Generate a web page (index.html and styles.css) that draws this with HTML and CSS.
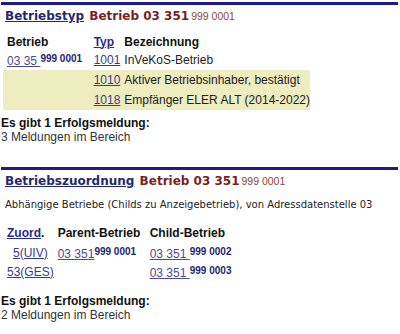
FILE: index.html
```html
<!DOCTYPE html>
<html lang="de">
<head>
<meta charset="utf-8">
<link rel="stylesheet" href="styles.css">
</head>
<body>
<section class="block">
  <div class="head">
    <a class="head-link" href="#">Betriebstyp</a>
    <span class="head-title">Betrieb 03 351</span><span class="head-num">999 0001</span>
  </div>
  <table class="grid grid-typ">
    <tr class="hdr">
      <th class="c-betrieb">Betrieb</th>
      <th class="c-typ"><a href="#">Typ</a></th>
      <th class="c-bez">Bezeichnung</th>
    </tr>
    <tr>
      <td><a class="bnr" href="#">03 35 </a><b class="sup">999 0001</b></td>
      <td><a class="lnk" href="#">1001</a></td>
      <td class="c-bez">InVeKoS-Betrieb</td>
    </tr>
    <tr class="hl">
      <td></td>
      <td><a class="lnk" href="#">1010</a></td>
      <td class="c-bez">Aktiver Betriebsinhaber, bestätigt</td>
    </tr>
    <tr class="hl">
      <td></td>
      <td><a class="lnk" href="#">1018</a></td>
      <td class="c-bez">Empfänger ELER ALT (2014-2022)</td>
    </tr>
  </table>
  <div class="msg">
    <div class="msg-title">Es gibt 1 Erfolgsmeldung:</div>
    <div>3 Meldungen im Bereich</div>
  </div>
</section>

<section class="block block-2">
  <div class="head">
    <a class="head-link" href="#">Betriebszuordnung</a>
    <span class="head-title">Betrieb 03 351</span><span class="head-num">999 0001</span>
  </div>
  <p class="sub">Abhängige Betriebe (Childs zu Anzeigebetrieb), von Adressdatenstelle 03</p>
  <table class="grid grid-zu">
    <tr class="hdr">
      <th class="c-zu"><a href="#">Zuord</a>.</th>
      <th class="c-par">Parent-Betrieb</th>
      <th class="c-chi">Child-Betrieb</th>
    </tr>
    <tr>
      <td class="center"><a class="lnk" href="#">5(UIV)</a></td>
      <td><a class="bnr" href="#">03 351</a><b class="sup">999 0001</b></td>
      <td><a class="bnr" href="#">03 351 </a><b class="sup">999 0002</b></td>
    </tr>
    <tr>
      <td class="center"><a class="lnk" href="#">53(GES)</a></td>
      <td></td>
      <td><a class="bnr" href="#">03 351 </a><b class="sup">999 0003</b></td>
    </tr>
  </table>
  <div class="msg msg-2">
    <div class="msg-title">Es gibt 1 Erfolgsmeldung:</div>
    <div>2 Meldungen im Bereich</div>
  </div>
</section>
</body>
</html>
```
FILE: styles.css
```css
html, body {
  margin: 0;
  padding: 0;
  background: #fff;
}
body {
  padding: 2px 2px 0 1px;
  font-family: "Liberation Sans", Arial, sans-serif;
  font-size: 12px;
  color: #222;
}
a {
  color: #3a3a80;
}
.head {
  border-top: 3px solid #1c1c8e;
  padding: 3px 0 0 4px;
  height: 18px;
  line-height: 16px;
  font-family: "DejaVu Sans", Verdana, sans-serif;
  font-size: 12px;
  font-weight: bold;
}
.head-link {
  color: #1f2a6e;
}
.head-title {
  font-family: "DejaVu Sans", Verdana, sans-serif;
  color: #7a1f1f;
  margin-left: 1px;
}
.head-num {
  font-family: "Liberation Sans", Arial, sans-serif;
  font-weight: normal;
  font-size: 10.5px;
  color: #8a4a3a;
  margin-left: 2px;
}
.grid {
  border-collapse: collapse;
  margin-left: 2px;
}
.grid th, .grid td {
  padding: 0 0 0 4px;
  line-height: 14px;
  text-align: left;
  white-space: nowrap;
  vertical-align: middle;
}
.grid-typ {
  margin-top: 7px;
  width: 307px;
}
.grid-typ .hdr th {
  height: 17px;
}
.grid-typ td {
  height: 20px;
}
.grid th {
  font-weight: bold;
  color: #111;
}
.grid th a {
  color: #2a2a85;
}
.c-betrieb { width: 89px; }
.c-typ { width: 22px; }
.grid .c-bez { padding-left: 4px; }
.hl td {
  background: #ededc0;
}
.bnr {
  color: #4c4c8c;
}
.lnk {
  color: #3c3c86;
}
.sup {
  font-size: 10px;
  color: #24246e;
  vertical-align: 3px;
}
.msg {
  margin-top: 6px;
  line-height: 14px;
  color: #333;
}
.msg-2 {
  margin-top: 13px;
}
.msg-title {
  font-weight: bold;
  color: #111;
}
.block-2 {
  margin-top: 23px;
}
.sub {
  margin: 8px 0 0 4px;
  font-family: "DejaVu Sans", Verdana, sans-serif;
  font-size: 10px;
  color: #222;
}
.grid-zu {
  margin-top: 13px;
}
.grid-zu th { height: 20px; }
.grid-zu td { height: 19px; }
.center { text-align: center !important; }
.c-zu { width: 46px; }
.c-par { width: 88px; }
```
